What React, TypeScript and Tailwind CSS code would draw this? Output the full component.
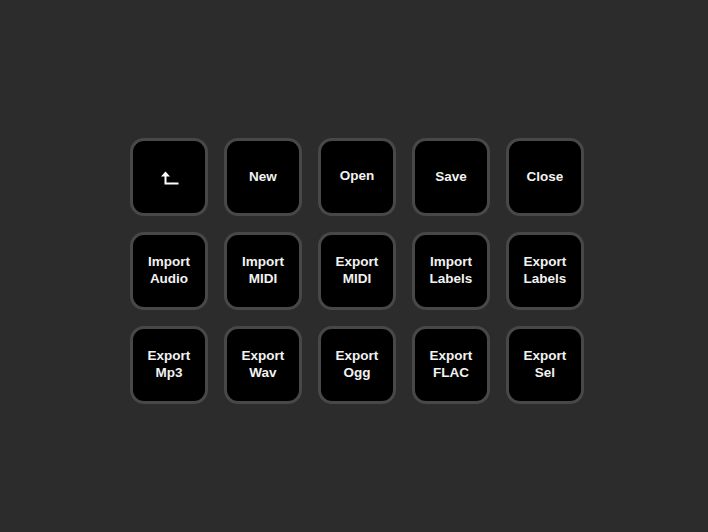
import React from "react";

const labels: (string[] | null)[] = [
  null,
  ["New"],
  ["Open"],
  ["Save"],
  ["Close"],
  ["Import", "Audio"],
  ["Import", "MIDI"],
  ["Export", "MIDI"],
  ["Import", "Labels"],
  ["Export", "Labels"],
  ["Export", "Mp3"],
  ["Export", "Wav"],
  ["Export", "Ogg"],
  ["Export", "FLAC"],
  ["Export", "Sel"],
];

function BackIcon() {
  return (
    <svg width="18" height="14" viewBox="0 0 18 14" fill="none">
      <path d="M0 5.5 L4.5 0.5 L9 5.5 Z" fill="#ffffff" />
      <path d="M4.5 5 V12.5 H17.5" stroke="#ffffff" strokeWidth="2" />
    </svg>
  );
}

export default function App() {
  return (
    <div className="w-[708px] h-[532px] bg-[#2c2c2c] pl-[130px] pt-[138px]" style={{ fontFamily: '"Liberation Sans", Arial, sans-serif' }}>
      <div className="grid grid-cols-[repeat(5,78px)] gap-[16px]">
        {labels.map((l, i) => {
          const desc = l && l.some((s) => /[pgy]/.test(s)) && !l.some((s) => s === "Import" || s === "Export") ? "-translate-y-[2px]" : "-translate-y-[1px]";
          return (
            <div
              key={i}
              className="w-[78px] h-[78px] rounded-[14px] border-[3px] border-[#484848] bg-black flex items-center justify-center text-center"
            >
              {l === null ? (
                <div className="translate-x-[1px] translate-y-[1px]">
                  <BackIcon />
                </div>
              ) : (
                <div className={`text-[13.5px] leading-[17px] font-bold text-[#f2f2f2] ${desc}`}>
                  {l.map((s, j) => (
                    <div key={j}>{s}</div>
                  ))}
                </div>
              )}
            </div>
          );
        })}
      </div>
    </div>
  );
}
